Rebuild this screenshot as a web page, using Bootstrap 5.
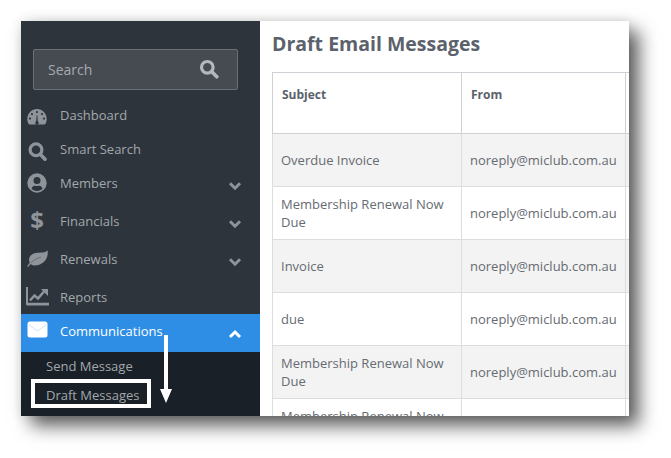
<!DOCTYPE html>
<html lang="en">
<head>
<meta charset="utf-8">
<title>Draft Email Messages</title>
<link href="https://cdn.jsdelivr.net/npm/bootstrap@5.3.0/dist/css/bootstrap.min.css" rel="stylesheet">
<style>
html,body{height:100%;overflow:hidden;background:#fff;font-family:"Open Sans",sans-serif;font-size:13px}
.shot-frame{position:relative;width:608px;height:395px;margin:21px 0 0 21px;overflow:hidden;background:#fff;box-shadow:10px 10px 17px rgba(0,0,0,.62),0 0 12px rgba(0,0,0,.12)}
.side-panel{width:239px;flex:none;background:#2d343b;height:395px}
.side-search{margin:28px 22px 8px 12px;height:41px;background:#464b52;border:1px solid #6c7076;border-radius:2px;padding:0 18px 0 14px;color:#a6a9ad;font-size:14px}
.search-glyph{margin-bottom:2px}
.side-item{height:38px;padding:7px 18px 0 5px;color:#a3a8ad;line-height:20px}
.side-item.is-short{height:34px}
.side-item.is-active{background:#2e8ee6;color:#fff}
.side-ico{width:22px;height:20px;margin-right:12px;flex:none;color:#8f949b;line-height:20px;text-align:center}
.side-ico.is-raised{margin-top:-2px;height:22px}
.side-ico.is-raised3{margin-top:-3px;height:23px}
.dollar-ico{font-size:24px;font-weight:700;margin-top:-3px;height:23px;line-height:24px}
.is-active .side-ico{color:#fff}
.side-chev{margin-top:8px;flex:none}
.side-sub{background:#1a2027;height:64px;color:#a3a8ad}
.sub-link{height:28px;line-height:20px;padding:4px 0 0 25px}
.sub-boxed{width:120px;height:29px;margin-left:10px;padding:2px 0 0 11px;border:4px solid #fff;line-height:20px;margin-top:-1px}
.main-panel{padding-left:12px;color:#5f656d;min-width:0;flex:1}
.main-title{font-size:19.5px;font-weight:700;line-height:28px;margin:9px 0 14px;color:#5b626b}
.mail-table{width:520px;table-layout:fixed;border-collapse:collapse;font-size:13px;color:#666b72}
.mail-table th,.mail-table td{border:1px solid #ddd;padding:0 8px;height:53px;vertical-align:middle;line-height:18px}
.mail-table th{height:61px;vertical-align:top;padding:13px 9px;font-size:12px;border-color:#cfd0d6;color:#5b626b;font-weight:700}
.mail-table tr:nth-child(odd) td{background:#f3f3f3}
.tip-arrow{position:absolute;left:139px;top:314px;width:12px;height:68px}
</style>
</head>
<body>
<div class="shot-frame d-flex">
  <aside class="side-panel">
    <div class="side-search d-flex align-items-center justify-content-between">
      <span>Search</span>
      <svg class="search-glyph" width="20" height="20" viewBox="0 0 20 20"><circle cx="8.300" cy="8.300" r="5.800" fill="none" stroke="#b4b7bb" stroke-width="3.200"/><path d="M12.800 12.800l5 5" stroke="#b4b7bb" stroke-width="3.600" stroke-linecap="round"/></svg>
    </div>
    <div class="side-item is-short d-flex">
      <span class="side-ico"><svg width="20" height="18" viewBox="0 0 20 18"><path fill="currentColor" fill-rule="evenodd" d="M10 1C4.500 1 .3 5.500.3 11c0 2 .5 3.600 1.400 5 .2.300.5.500.9.500h14.800c.4 0 .7-.2.9-.5.9-1.400 1.400-3 1.400-5C19.700 5.500 15.500 1 10 1zM10 3a1.100 1.100 0 1 1 0 2.200A1.100 1.100 0 0 1 10 3zM5 5a1.100 1.100 0 1 1 0 2.200A1.100 1.100 0 0 1 5 5zm10 0a1.100 1.100 0 1 1 0 2.200A1.100 1.100 0 0 1 15 5zM3 9.500a1.100 1.100 0 1 1 0 2.200 1.100 1.100 0 0 1 0-2.200zm14 0a1.100 1.100 0 1 1 0 2.200 1.100 1.100 0 0 1 0-2.200zM9.700 7h.6l.5 6.300a1.700 1.700 0 1 1-1.600 0z"/></svg></span>
      <span>Dashboard</span>
    </div>
    <div class="side-item is-short d-flex">
      <span class="side-ico"><svg width="20" height="20" viewBox="0 0 20 20"><circle cx="9" cy="8.800" r="5.900" fill="none" stroke="currentColor" stroke-width="3.200"/><path d="M13.500 13.500l4.500 4.800" stroke="currentColor" stroke-width="3.500" stroke-linecap="round"/></svg></span>
      <span>Smart Search</span>
    </div>
    <div class="side-item d-flex">
      <span class="side-ico is-raised"><svg width="20" height="20" viewBox="0 0 20 20"><path fill="currentColor" fill-rule="evenodd" d="M10 .3a9.700 9.700 0 1 1 0 19.400A9.700 9.700 0 0 1 10 .3zm0 3.700a3.500 3.500 0 1 0 0 7 3.500 3.500 0 0 0 0-7zM4.500 15.700a7.800 7.800 0 0 0 11 0c-.5-1.900-1.900-3-3.300-3-.7 0-1.200.4-2.200.4s-1.500-.4-2.200-.4c-1.400 0-2.800 1.100-3.300 3z"/></svg></span>
      <span class="flex-grow-1">Members</span>
      <svg class="side-chev" width="14" height="10" viewBox="0 0 14 10"><path d="M2 2.200l5 5 5-5" fill="none" stroke="#8f949b" stroke-width="3"/></svg>
    </div>
    <div class="side-item d-flex">
      <span class="side-ico dollar-ico">$</span>
      <span class="flex-grow-1">Financials</span>
      <svg class="side-chev" width="14" height="10" viewBox="0 0 14 10"><path d="M2 2.200l5 5 5-5" fill="none" stroke="#8f949b" stroke-width="3"/></svg>
    </div>
    <div class="side-item d-flex">
      <span class="side-ico is-raised"><svg width="21" height="18" viewBox="0 0 21 18"><path fill="currentColor" d="M20.500.3c-.8 1.300-2.400 2-4.800 2.200C11.200 2.700 6.200 2.500 3.500 5.800 1.700 8 1.800 10.800 2.700 12.700 1.700 13.700.9 14.900.3 16.200c-.2.500.8 1 1.100.5.600-1.100 1.400-2 2.200-2.800 1.900 1.700 4.800 2.100 7.700 1.200C16.800 13.500 22 8 20.500.3z"/><path d="M3.800 13C6.500 10.200 10 8.200 14 7" fill="none" stroke="#2d343b" stroke-width=".7" opacity=".55"/></svg></span>
      <span class="flex-grow-1">Renewals</span>
      <svg class="side-chev" width="14" height="10" viewBox="0 0 14 10"><path d="M2 2.200l5 5 5-5" fill="none" stroke="#8f949b" stroke-width="3"/></svg>
    </div>
    <div class="side-item is-short d-flex">
      <span class="side-ico is-raised"><svg width="23" height="19" viewBox="0 0 23 19"><path fill="currentColor" d="M0 0h2v15.700h21V18.500H1.200C.5 18.500 0 18 0 17.300z"/><path d="M4 13.500l4.500-5 3.500 3 6-7" fill="none" stroke="currentColor" stroke-width="2.600"/><path fill="currentColor" d="M15 2h7v7z"/></svg></span>
      <span>Reports</span>
    </div>
    <div class="side-item is-active d-flex">
      <span class="side-ico is-raised3"><svg width="21" height="17" viewBox="0 0 21 17"><rect x=".5" y=".5" width="20" height="16" rx="2.500" fill="currentColor"/><path d="M1.500 3.500l9 6.500 9-6.500" fill="none" stroke="#cfe4f8" stroke-width="1"/></svg></span>
      <span class="flex-grow-1">Communications</span>
      <svg class="side-chev" width="14" height="10" viewBox="0 0 14 10"><path d="M2 8l5-5 5 5" fill="none" stroke="#fff" stroke-width="3"/></svg>
    </div>
    <div class="side-sub">
      <div class="sub-link">Send Message</div>
      <div class="sub-boxed">Draft Messages</div>
    </div>
  </aside>
  <main class="main-panel">
    <h1 class="main-title">Draft Email Messages</h1>
    <table class="mail-table">
      <colgroup><col style="width:189px"><col style="width:164px"><col></colgroup>
      <thead><tr><th>Subject</th><th>From</th><th></th></tr></thead>
      <tbody>
        <tr><td>Overdue Invoice</td><td>noreply@miclub.com.au</td><td></td></tr>
        <tr><td>Membership Renewal Now Due</td><td>noreply@miclub.com.au</td><td></td></tr>
        <tr><td>Invoice</td><td>noreply@miclub.com.au</td><td></td></tr>
        <tr><td>due</td><td>noreply@miclub.com.au</td><td></td></tr>
        <tr><td>Membership Renewal Now Due</td><td>noreply@miclub.com.au</td><td></td></tr>
        <tr><td>Membership Renewal Now Due</td><td>noreply@miclub.com.au</td><td></td></tr>
      </tbody>
    </table>
  </main>
  <svg class="tip-arrow" viewBox="0 0 12 68"><path d="M4 0h4v54h4l-6 14-6-14h4z" fill="#fff"/></svg>
</div>
<script src="https://cdn.jsdelivr.net/npm/bootstrap@5.3.0/dist/js/bootstrap.bundle.min.js"></script>
</body>
</html>
